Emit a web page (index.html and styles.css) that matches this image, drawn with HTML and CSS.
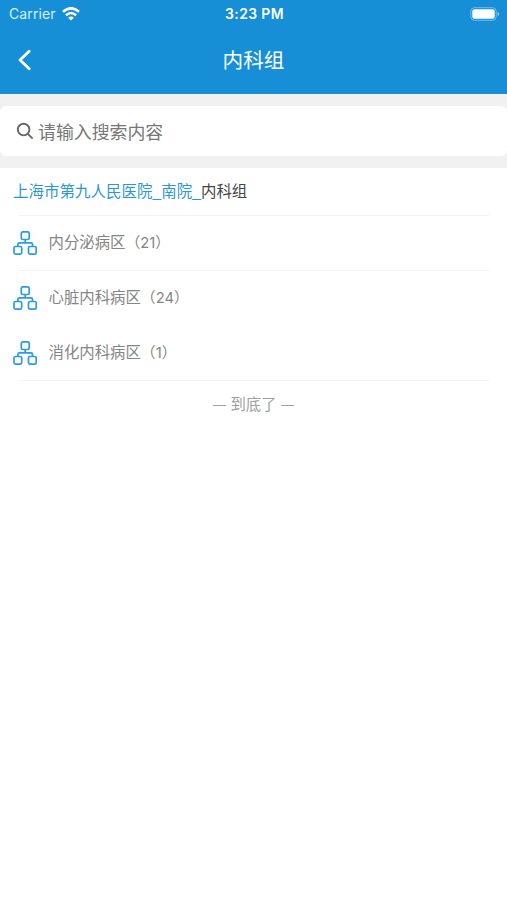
FILE: index.html
```html
<!DOCTYPE html>
<html lang="zh-CN">
<head>
    <meta charset="UTF-8">
    <meta name="viewport" content="width=device-width, initial-scale=1.0">
    <title>内科组</title>
    <link rel="stylesheet" href="styles.css">
</head>
<body>
    <!-- 图标 -->
    <svg class="sprite" width="0" height="0">
        <symbol id="icon-group" viewBox="0 0 24 24">
            <g fill="none" stroke="currentColor" stroke-width="1.7">
                <rect x="8.3" y="0.9" width="7.9" height="7.6" rx="1.5"/>
                <rect x="1" y="15.5" width="7.7" height="7.6" rx="1.5"/>
                <rect x="15.5" y="15.5" width="7.7" height="7.6" rx="1.5"/>
                <path d="M12.2 8.7v3.1M4.9 15.5v-2.2q0-1.5 1.5-1.5h11.6q1.5 0 1.5 1.5v2.2"/>
            </g>
        </symbol>
    </svg>

    <header class="header">
        <div class="status">
            <div class="carrier">
                <span>Carrier</span>
                <svg class="wifi" viewBox="0 0 18 14" fill="none" stroke="#fff" stroke-width="2.5">
                    <path d="M0.9 4.9Q9-2.2 17.1 4.9"/>
                    <path d="M3.9 8.3Q9 3.8 14.1 8.3"/>
                    <path d="M6.1 10.7Q9 8.3 11.9 10.7L9 13.6Z" fill="#fff" stroke="none"/>
                </svg>
            </div>
            <div class="time">3:23 PM</div>
            <div class="power">
                <svg class="battery" viewBox="0 0 30 14">
                    <rect x="0.8" y="0.7" width="25.4" height="12.6" rx="3.6" fill="none" stroke="#fff" stroke-opacity="0.4" stroke-width="1"/>
                    <rect x="2.3" y="2.2" width="22.4" height="9.6" rx="2.2" fill="#fff"/>
                    <path d="M27.5 5v4q1.8-.6 1.8-2t-1.8-2z" fill="#fff" fill-opacity="0.5"/>
                </svg>
            </div>
        </div>
        <div class="nav">
            <svg class="back" viewBox="0 0 14 22" fill="none" stroke="#fff" stroke-width="2.8" stroke-linecap="round" stroke-linejoin="round">
                <path d="M11.2 2.3L2 11l9.2 8.7"/>
            </svg>
            <h1>内科组</h1>
        </div>
    </header>

    <div class="search">
        <svg class="search-icon" viewBox="0 0 18 18" fill="none" stroke="#666" stroke-width="1.9">
            <circle cx="7.6" cy="7.6" r="5.8"/>
            <path d="M11.8 11.8l4.8 4.8"/>
        </svg>
        <span>请输入搜索内容</span>
    </div>

    <main class="content">
        <div class="crumb"><span class="link">上海市第九人民医院_南院_</span>内科组</div>
        <ul class="list">
            <li class="item">
                <svg class="icon"><use href="#icon-group"/></svg>
                <span class="name">内分泌病区<span class="count">（21）</span></span>
            </li>
            <li class="item">
                <svg class="icon"><use href="#icon-group"/></svg>
                <span class="name">心脏内科病区<span class="count">（24）</span></span>
            </li>
            <li class="item">
                <svg class="icon"><use href="#icon-group"/></svg>
                <span class="name">消化内科病区<span class="count">（1）</span></span>
            </li>
        </ul>
        <p class="end"><span class="dash">—</span> 到底了 <span class="dash">—</span></p>
    </main>
</body>
</html>
```
FILE: styles.css
```css
* {
    margin: 0;
    padding: 0;
    box-sizing: border-box;
}

body {
    min-height: 900px;
    background: #f1f1f1;
    font-family: Inter, "Noto Sans CJK SC", sans-serif;
    font-size: 15.4px;
    color: #444;
    display: flex;
    flex-direction: column;
}

.sprite {
    position: absolute;
}

.header {
    height: 94px;
    background: #178fd6;
    color: #fff;
}

/* 状态栏 */
.status {
    height: 27px;
    padding: 0 7px 0 9px;
    display: grid;
    grid-template-columns: 1fr auto 1fr;
    align-items: center;
    font-size: 14px;
}

.carrier {
    display: flex;
    align-items: center;
    gap: 6px;
    color: #d9f1ff;
    letter-spacing: 0.1px;
}

.wifi {
    width: 18px;
    height: 14px;
}

.time {
    font-weight: 600;
    font-size: 13.9px;
    letter-spacing: 0.4px;
}

.power {
    display: flex;
    justify-content: flex-end;
}

.battery {
    width: 30px;
    height: 14px;
}

.nav {
    height: 66px;
    padding: 0 18px;
    display: grid;
    grid-template-columns: 14px 1fr 14px;
    align-items: center;
}

.back {
    width: 14px;
    height: 22px;
}

.nav h1 {
    padding-bottom: 2px;
    font-size: 20.6px;
    font-weight: 400;
    text-align: center;
}

.search {
    height: 50px;
    margin: 12px 0;
    padding: 0 16px;
    display: flex;
    align-items: center;
    gap: 4px;
    background: #fff;
    border-radius: 6px;
    font-size: 17.9px;
    color: #777;
}

.search-icon {
    width: 18px;
    height: 18px;
}

.content {
    flex: 1;
    background: #fff;
}

.crumb {
    height: 47px;
    padding-left: 13px;
    line-height: 47px;
}

.link {
    font-family: "Liberation Sans", "Noto Sans CJK SC", sans-serif;
    letter-spacing: 0.12px;
    color: #2b97d8;
}

.list {
    list-style: none;
    margin: 0 18px 0 19px;
    border-top: 1px solid #f2f2f2;
}

.item {
    height: 55px;
    margin-left: -6px;
    padding-bottom: 2px;
    display: flex;
    align-items: center;
    gap: 11.5px;
    color: #858585;
    /* 分隔线比图标缩进 6px */
    background: linear-gradient(#f2f2f2, #f2f2f2) no-repeat 6px 100% / 100% 1px;
}

.item:nth-child(2) {
    background: none;
}

.icon {
    width: 24px;
    height: 24px;
    color: #2b9cdf;
}

.name {
    padding-bottom: 4px;
}

.count {
    font-size: 14.8px;
}

.end {
    height: 48px;
    line-height: 48px;
    text-align: center;
    color: #a0a0a0;
}

.dash {
    font-size: 13px;
}
```
